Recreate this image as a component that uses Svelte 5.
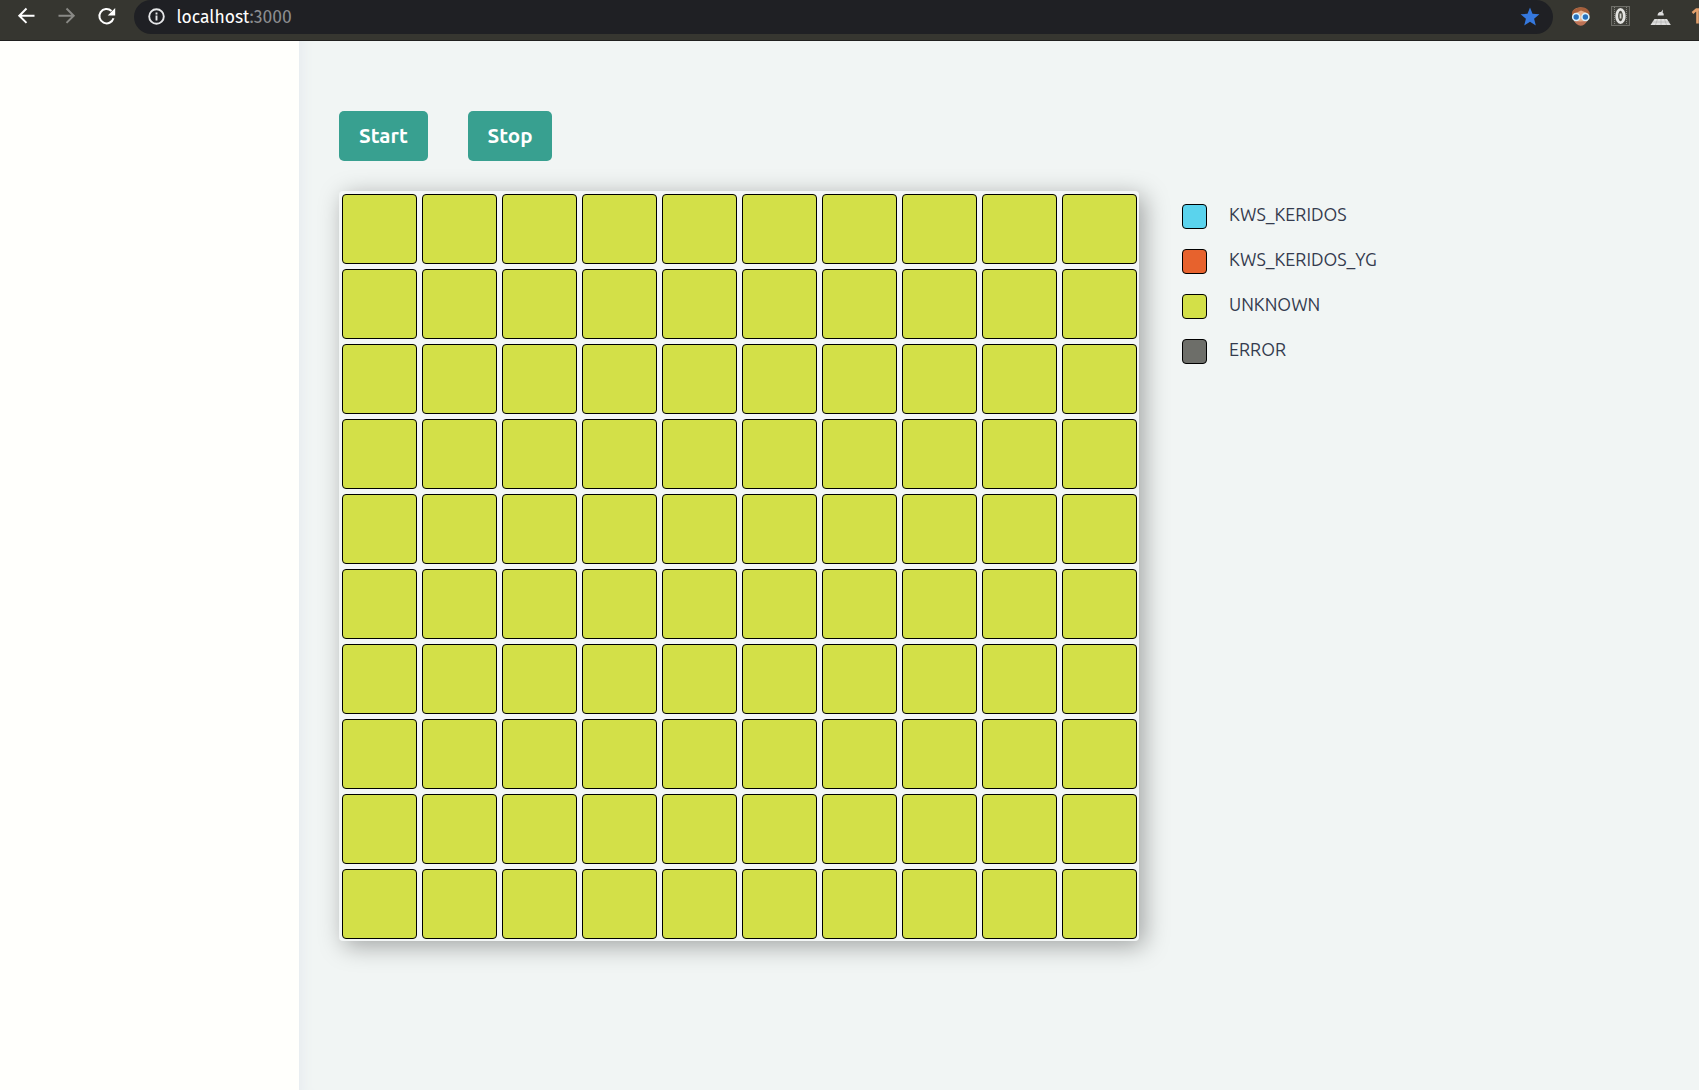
<script>
  const cells = Array.from({ length: 100 }, (_, i) => i);
  const legend = [
    { name: 'KWS_KERIDOS', kind: 'keridos' },
    { name: 'KWS_KERIDOS_YG', kind: 'yg' },
    { name: 'UNKNOWN', kind: 'unknown' },
    { name: 'ERROR', kind: 'error' }
  ];
</script>

<div class="window">
  <header class="toolbar">
    <svg class="nav" viewBox="0 0 40 40"><path d="M34.500 15.700H19.500M26.500 8.500L19.300 15.700L26.500 22.900" /></svg>
    <svg class="nav dim" viewBox="0 0 40 40"><path d="M18.500 15.700H33.500M26.500 8.500L33.700 15.700L26.500 22.900" /></svg>
    <svg class="nav" viewBox="0 0 40 40">
      <path d="M33.500 18.200A7.200 7.200 0 1 1 31.500 10.900" />
      <path class="solid" d="M35.200 8v7.500h-7.500z" />
    </svg>
    <div class="address">
      <svg class="info" viewBox="0 0 18 18">
        <circle cx="8.500" cy="8.500" r="7.300" />
        <path d="M8.500 7.500v5M8.500 4.400v2" />
      </svg>
      <span class="url"><b>localhost</b>:3000</span>
      <svg class="star" viewBox="0 0 20 20"><path d="M10 .5l2.500 6.300 6.900.5-5.300 4.400 1.700 6.700L10 14.700l-5.800 3.700 1.700-6.700L.6 7.300l6.900-.5z" /></svg>
    </div>
    <svg class="extensions" viewBox="0 0 146 40">
      <path d="M19.500 14Q19 8 27.500 7.500Q36.500 8 36 15L34.500 21Q28 28 21 21z" fill="#e9b18f" />
      <path d="M19 16Q18 9.500 24 8Q33 5.500 36.500 12V16L33 12.500L28 10.500L23 13z" fill="#a65f3b" />
      <path d="M21 20.500Q27 22.500 34.500 20.500Q31.500 25.800 27.500 25.800Q23.500 25.500 21 20.500z" fill="#bd7356" />
      <circle cx="23.200" cy="17" r="3.500" fill="#2871bd" stroke="#d9f1fc" stroke-width="1.600" />
      <circle cx="32.400" cy="17" r="3.500" fill="#2871bd" stroke="#d9f1fc" stroke-width="1.600" />
      <rect x="58.500" y="6.500" width="18" height="19" fill="#41413b" stroke="#a0a09a" stroke-dasharray="1 1" />
      <path d="M61.500 7v18M73.500 7v18" stroke="#85857e" stroke-dasharray="1 1" />
      <ellipse cx="67.500" cy="16" rx="3.800" ry="6.600" fill="#484840" stroke="#e4e4e1" stroke-width="2.800" />
      <path d="M67.500 13.500v5" stroke="#d5d5d0" stroke-width="1.800" />
      <path d="M104.500 15.500Q105 11.500 108 12l2-2.500-.3 3.300q1.500.7 1 2.700z" fill="#ddd" />
      <path d="M101.500 19h12.500l3.800 6H97.500z" fill="#e0e0df" />
      <path d="M99.500 22h17M104.500 19l-2 6M108 19v6M111.500 19l2 6" stroke="#a0a09c" stroke-width=".5" />
      <path d="M139.500 13l4-3.500h4M144.500 9v14.500" stroke="#e3a06d" stroke-width="2.600" fill="none" />
    </svg>
  </header>

  <div class="body">
    <aside></aside>
    <main>
      <div class="actions">
        <button class="start">Start</button>
        <button class="stop">Stop</button>
      </div>
      <div class="content">
        <div class="board">
          {#each cells as cell (cell)}
            <div class="cell"></div>
          {/each}
        </div>
        <ul>
          {#each legend as item (item.kind)}
            <li><i class={item.kind}></i><span class="label">{item.name}</span></li>
          {/each}
        </ul>
      </div>
    </main>
  </div>
</div>

<style>
  :global(body) { margin: 0; overflow: hidden; }
  .window { width: 1699px; height: 1090px; display: flex; flex-direction: column; overflow: hidden; font-family: Ubuntu, "Noto Sans", sans-serif; }
  .toolbar { box-sizing: border-box; height: 41px; flex: none; display: flex; align-items: flex-start; background: #363630; border-bottom: 1px solid #20201f; }
  .nav { width: 40px; height: 40px; flex: none; fill: none; stroke: #fff; stroke-width: 2; }
  .nav.dim { stroke: #898985; }
  .nav:nth-child(3) { margin-right: 14px; }
  .solid { fill: #fff; stroke: none; }
  .address { box-sizing: border-box; width: 1419px; height: 34px; flex: none; display: flex; align-items: center; padding: 0 13px 0 14px; border-radius: 17px; background: #1f2024; }
  .info { width: 18px; height: 18px; fill: none; stroke: #e5e6e8; stroke-width: 1.9; }
  .url { margin-left: 10.5px; padding-top: 1px; font: 17.5px/34px "Fira Sans", "Noto Sans", sans-serif; color: #8c8d90; }
  .url b { font-weight: 400; color: #fff; }
  .star { width: 20px; height: 20px; margin-left: auto; fill: #3578de; }
  .extensions { width: 146px; height: 40px; flex: none; }
  .body { flex: 1; display: flex; min-height: 0; }
  aside { width: 299px; flex: none; background: #fffffc; }
  main { flex: 1; padding: 70px 0 0 40px; background: #f1f5f4; box-shadow: inset 13px 0 14px -12px #e3e8ee; }
  .actions { display: flex; gap: 40px; }
  button { box-sizing: border-box; height: 50px; padding: 0; border: 0; border-radius: 5px; background: #38a090; color: #fff; font: 700 20.6px/50px Ubuntu, "Noto Sans", sans-serif; }
  .start { width: 89px; }
  .stop { width: 84px; }
  .content { display: flex; margin-top: 30px; }
  .board { box-sizing: border-box; width: 800px; height: 750px; padding: 3px 2px 2px 3px; display: grid; grid-template-columns: repeat(10, 75px); grid-auto-rows: 70px; gap: 5px; border-radius: 4px; background: #f3f6f6; box-shadow: 5px 5px 25px rgba(0, 0, 0, .34); }
  .cell, i { box-sizing: border-box; border: 1px solid #000; border-radius: 4px; background: #d3e048; }
  ul { list-style: none; margin: 13px 0 0 43px; padding: 0; display: flex; flex-direction: column; gap: 20px; }
  li { height: 25px; display: flex; }
  i { width: 25px; height: 25px; margin-right: 22px; }
  .label { font-size: 17.8px; line-height: 20px; color: #343b4e; white-space: nowrap; }
  i.keridos { background: #5ad3ed; }
  i.yg { background: #e7622d; }
  i.error { background: #6d6e69; }
</style>
